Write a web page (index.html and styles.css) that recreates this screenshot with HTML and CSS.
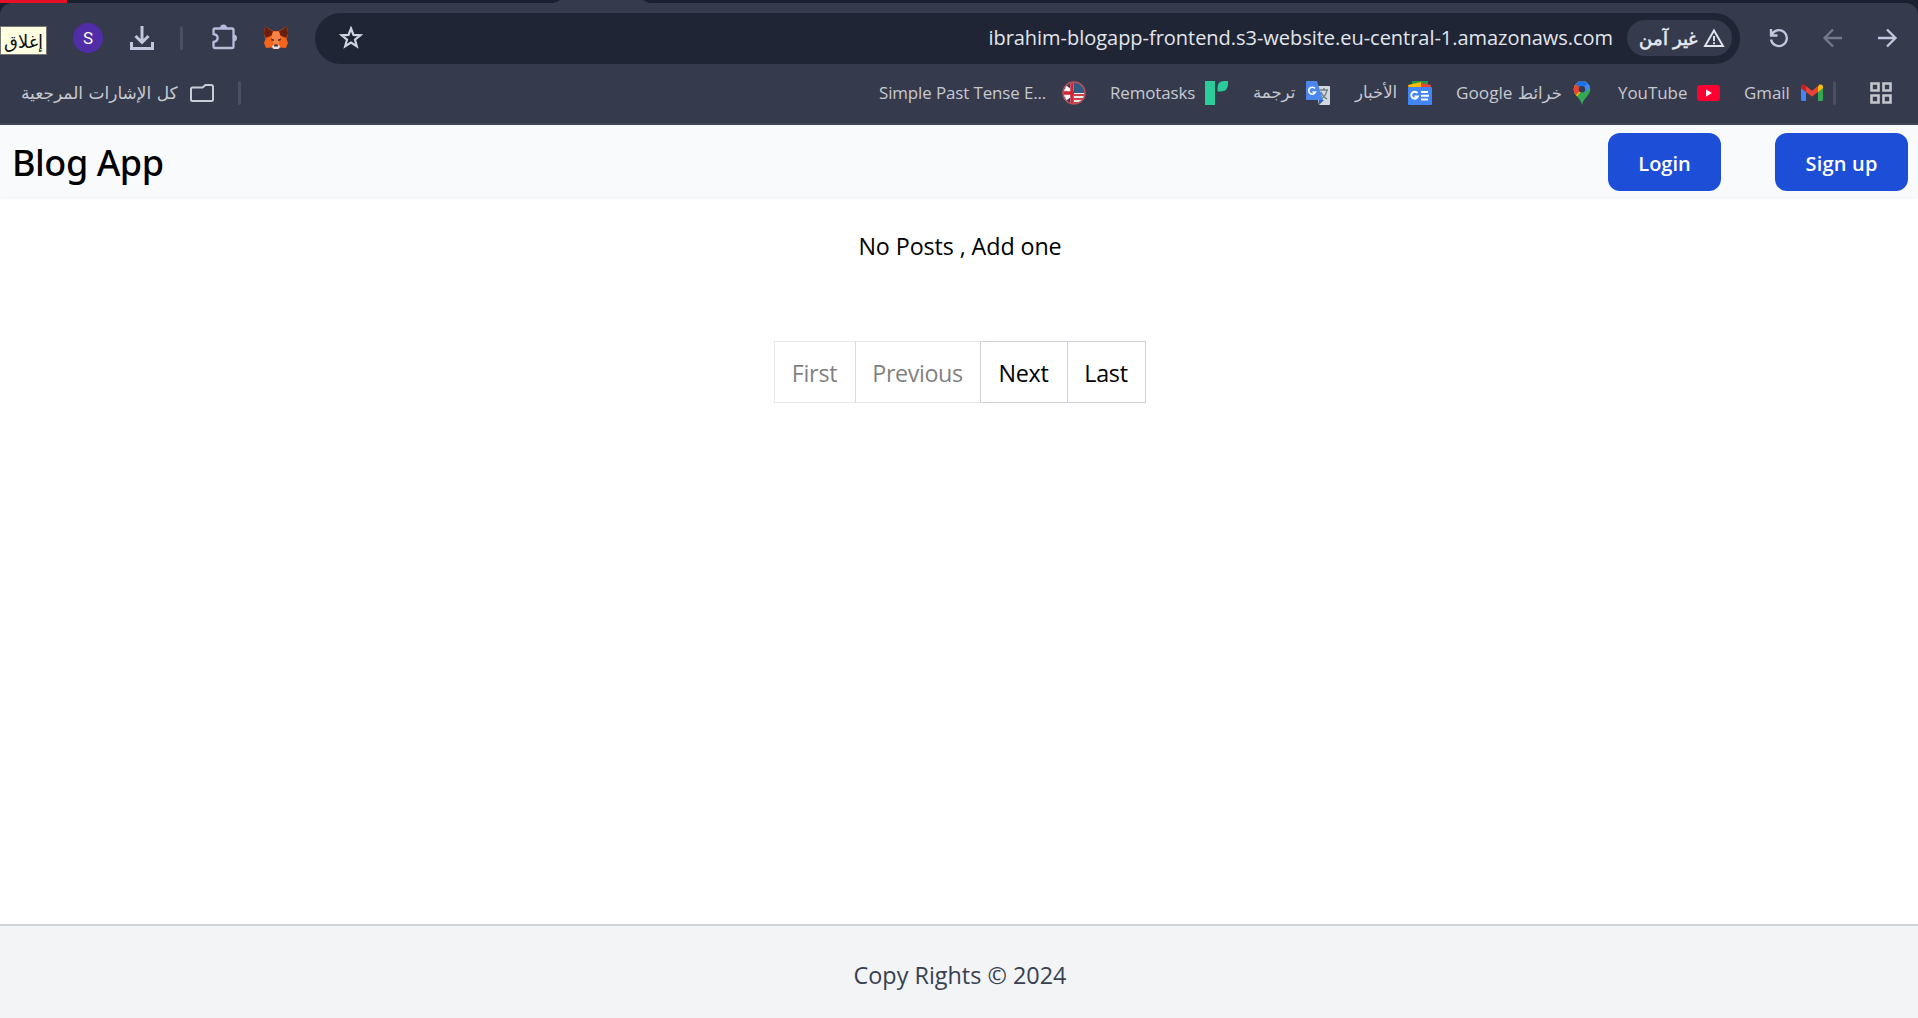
FILE: index.html
```
<!DOCTYPE html>
<html lang="en">
<head>
<meta charset="utf-8">
<title>Blog App</title>
<link rel="stylesheet" href="styles.css">
</head>
<body>
<header class="browser">
  <div class="tabstrip">
    <div class="close-hover"></div>
    <svg class="active-tab" width="97" height="3" viewBox="0 0 97 3"><path d="M0 3Q5 2 7 0H90Q92 2 97 3Z" fill="#353b4d"/></svg>
  </div>
  <div class="chrome">
    <div class="toolbar">
      <span class="avatar">S</span>
      <svg class="download" width="24" height="24" viewBox="0 0 24 24" fill="none" stroke="#c0c7de" stroke-width="3"><path d="M12 0v16M5.500 10l6.500 6.500 6.500-6.500M1.500 16v6.500h21V16"/></svg>
      <span class="divider tool-divider"></span>
      <svg class="puzzle" width="25" height="26" viewBox="0 0 25 26"><path d="M3 4.500h17q1.500 0 1.500 1.500v16.500q0 1.500-1.500 1.500H3q-1.500 0-1.500-1.500v-4.500c5.500-1 5.500-7 0-8V6Q1.500 4.500 3 4.500Z" fill="none" stroke="#b6bdd8" stroke-width="2.300"/><path d="M8 4a3.500 3.500 0 0 1 7 0ZM21.500 10.500a3.500 3.500 0 0 1 0 7Z" fill="#b6bdd8"/></svg>
      <svg class="fox" width="24" height="24" viewBox="0 0 24 24"><path d="M1 .5L9 5h6l8-4.500 1 7-1.500 5.500 1.500 4-2 5-5-.5-2.500 1.500h-5L7 21.500l-5 .5-2-5L1.500 13 0 7.500Z" fill="#f5651c"/><path d="M1 .5L9 5.500 7.500 9.500 2 12 0 7.500ZM23 .5L15 5.500l1.500 4 5.500 2.500 2-4.500Z" fill="#6b200d"/><path d="M9 6h6l1.500 5-2 8h-5l-2-8Z" fill="#fa8147"/><path d="M7 12.500l3 1v1.500l-2.500-.5ZM17 12.500l-3 1v1.500l2.500-.5Z" fill="#4a3028"/><path d="M8 20l2-1h4l2 1-.5 1.500L14 23h-4l-1.500-1.500Z" fill="#dce3ea"/><path d="M10.500 18.500h3l.5 2h-4Z" fill="#25282c"/></svg>
      <div class="omnibox">
        <svg width="24" height="24" viewBox="0 0 24 24" fill="none" stroke="#d0d4de" stroke-width="2.200"><path d="M12 2.500l2.500 6.400 6.800.4-5.300 4.400 1.800 6.600L12 16.600l-5.800 3.700L8 13.700 2.700 9.300l6.800-.4Z"/></svg>
        <span class="url">ibrahim-blogapp-frontend.s3-website.eu-central-1.amazonaws.com</span>
        <span class="security"><span class="arabic security-text" dir="rtl">غير آمن</span>
          <svg width="22" height="20" viewBox="0 0 22 20" fill="none" stroke="#e2e5ee" stroke-width="1.900"><path d="M11 2.500L20 18H2ZM11 8v5M11 14.300v2"/></svg>
        </span>
      </div>
      <div class="nav-icons">
        <svg width="24" height="24" viewBox="0 0 24 24" fill="none" stroke="#c0c7de" stroke-width="2.300"><path d="M4 3v6.500h6.500M4.500 9a8 8 0 1 1-.5 4.500"/></svg>
        <svg width="24" height="24" viewBox="0 0 24 24" fill="none" stroke="#747a8c" stroke-width="2.300"><path d="M21 12H4M12 3.500L3.500 12l8.500 8.500"/></svg>
        <svg width="24" height="24" viewBox="0 0 24 24" fill="none" stroke="#c0c7de" stroke-width="2.300"><path d="M3 12h17M12 3.500l8.500 8.500-8.500 8.500"/></svg>
      </div>
    </div>
    <div class="bookmarks">
      <div class="bookmark all"><span class="arabic" dir="rtl">كل الإشارات المرجعية</span>
        <svg width="24" height="20" viewBox="0 0 24 20"><path d="M2.500 4.500H12.500L15.500 2H21q2 0 2 2v12.500q0 1.500-1.500 1.500h-19Q1 18 1 16.500V6Q1 4.500 2.500 4.500Z" fill="none" stroke="#cacdd5" stroke-width="2"/></svg></div>
      <span class="divider all-divider"></span>
      <div class="bookmark-list">
        <div class="bookmark simple"><span>Simple Past Tense E...</span>
          <svg width="24" height="24" viewBox="0 0 24 24"><clipPath id="flag"><circle cx="12" cy="12" r="11"/></clipPath><g clip-path="url(#flag)"><path d="M0 0h24v24H0Z" fill="#eee"/><path d="M0 0h8v8H0ZM0 16h8v8H0Z" fill="#243d6b"/><path d="M0 3l9 7M0 21l9-7" stroke="#fff" stroke-width="3"/><path d="M0 12h12M10 0v24" stroke="#cc2534" stroke-width="3.500"/><path d="M12 0h12v12H12Z" fill="#315a85"/><path d="M12 14h12M12 18h12M12 22h12" stroke="#c94249" stroke-width="2"/></g><circle cx="12" cy="12" r="11" fill="none" stroke="#b8505b" stroke-width="1.500"/></svg></div>
        <div class="bookmark remo"><span>Remotasks</span>
          <svg width="23" height="24" viewBox="0 0 23 24"><path d="M0 0h10v24H0ZM23 0h-4q-6.500 0-6.500 7v3.500h3Q23 10.500 23 3Z" fill="#2bcc9a"/></svg></div>
        <div class="bookmark translate"><span class="arabic" dir="rtl">ترجمة</span>
          <svg width="24" height="24" viewBox="0 0 24 24"><path d="M9 5h14q1 0 1 1v17q0 1-1 1H13Z" fill="#d4d7db"/><path d="M13 19h5l-5 5Z" fill="#2b5dbd"/><path d="M14 9h8M18 7v2M21 9q-1 6-6 9M15 11q2 5 6 7" stroke="#6c8188" stroke-width="1.400" fill="none"/><path d="M1 0h10l6 19H1q-1 0-1-1V1Q0 0 1 0Z" fill="#4b87ed"/><path d="M9 7.500A3.500 3.500 0 1 0 9.500 11H6.500" fill="none" stroke="#fff" stroke-width="1.600"/></svg></div>
        <div class="bookmark news"><span class="arabic" dir="rtl">الأخبار</span>
          <svg width="24" height="24" viewBox="0 0 24 24"><path d="M4 0h16v8H4Z" fill="#249a50"/><path d="M0 4l13-3v7H1Z" fill="#fbbc04"/><path d="M13 2l10 2-1 5h-9Z" fill="#ea4335"/><rect y="6" width="24" height="18" rx="1" fill="#4285f4"/><path d="M9.500 12A3.500 3.500 0 1 0 10 15.500H6.500M13 11h7M13 14.800h8M13 18.500h7" fill="none" stroke="#fff" stroke-width="1.900"/></svg></div>
        <div class="bookmark maps"><span class="arabic" dir="rtl">خرائط <span class="latin">Google</span></span>
          <svg width="24" height="24" viewBox="0 0 24 24"><clipPath id="pin"><path d="M12 0a8.300 8.300 0 0 1 8.300 8.300c0 6-6.300 8-8.300 15.700C10 16.300 3.700 14.300 3.700 8.300A8.300 8.300 0 0 1 12 0Z"/></clipPath><g clip-path="url(#pin)"><path d="M0 0h24v24H0Z" fill="#34a853"/><path d="M0 0h20L3 20H0Z" fill="#fbbc04"/><path d="M0 0h15L12 8l-6 6H0Z" fill="#ea4335"/><path d="M5 2L10 7 20 4V0H5Z" fill="#1a73e8"/><path d="M12 8l6-6 4 3-8 7Z" fill="#4285f4"/></g><circle cx="12" cy="8.300" r="3.200" fill="#353b4d"/></svg></div>
        <div class="bookmark youtube"><span>YouTube</span>
          <svg width="23" height="16" viewBox="0 0 23 16"><rect width="23" height="16" rx="3.500" fill="#ff0033"/><path d="M9 4.500v7l6-3.500Z" fill="#fff"/></svg></div>
        <div class="bookmark gmail"><span>Gmail</span>
          <svg width="24" height="18" viewBox="0 0 24 18"><path d="M1 4l5 3.500V17H2.500Q1 17 1 15.500Z" fill="#4285f4"/><path d="M23 4l-5 3.500V17h3.500q1.500 0 1.500-1.500Z" fill="#34a853"/><path d="M18 2.500V8l5-3.700V3c0-2.500-2.500-3-4-2Z" fill="#fbbc04"/><path d="M6 2.500V8L1 4.300V3C1 .500 3.500 0 5 1Z" fill="#c5221f"/><path d="M6 2l6 4.700L18 2v6l-6 4.600L6 8Z" fill="#ea4335"/></svg></div>
      </div>
      <span class="divider apps-divider"></span>
      <svg class="apps" width="22" height="22" viewBox="0 0 22 22" fill="none" stroke="#c4c6cc" stroke-width="2.600"><path d="M1.500 1.500h7v7h-7ZM13.500 1.500h7v7h-7ZM1.500 13.500h7v7h-7ZM13.500 13.500h7v7h-7Z"/></svg>
    </div>
  </div>
  <div class="tooltip arabic" dir="rtl">إغلاق</div>
</header>
<nav class="navbar">
  <h1>Blog App</h1>
  <div class="actions"><button class="btn login">Login</button><button class="btn signup">Sign up</button></div>
</nav>
<main>
  <p class="empty">No Posts , Add one</p>
  <div class="pagination">
    <button class="page first" disabled>First</button><button class="page previous" disabled>Previous</button><button class="page next">Next</button><button class="page last">Last</button>
  </div>
</main>
<footer>Copy Rights © 2024</footer>
</body>
</html>
```
FILE: styles.css
```
*{box-sizing:border-box}
body{margin:0;height:1018px;display:flex;flex-direction:column;overflow:hidden;background:#fff;color:#000;font-family:"Open Sans","Noto Sans","DejaVu Sans",sans-serif}
svg{display:block;flex:none}
button{font-family:inherit;margin:0}
.browser{position:relative;height:125px;background:#1a2030;flex:none}
.tabstrip{display:flex;height:3px}
.close-hover{width:67px;background:#e81123}
.active-tab{margin-left:486px}
.chrome{height:122px;background:#353b4d;border-radius:12px 12px 0 0;border-bottom:2px solid #414755}
.toolbar{display:flex;align-items:center;height:70px;padding-left:73px}
.avatar{width:30px;height:30px;border-radius:50%;background:#512da8;color:#fff;font:17px/30px Roboto,sans-serif;text-align:center}
.download{margin-left:27px}
.divider{width:3px;height:24px;border-radius:2px;background:#4a5063;flex:none}
.tool-divider{margin-left:26px}
.puzzle{margin:-3px 0 0 29px}
.fox{margin-left:27px}
.omnibox{display:flex;align-items:center;width:1425px;height:51px;margin-left:27px;padding:0 8px 0 24px;border-radius:26px;background:#1f2534}
.url{margin-left:auto;color:#e2e5ee;font-size:20px;line-height:28px;letter-spacing:-.03px;white-space:nowrap}
.security{display:flex;align-items:center;justify-content:space-between;width:105px;height:36px;margin-left:14px;padding:0 7px 0 12px;border-radius:18px;background:#353b4d;color:#e2e5ee}
.arabic{font-family:"DejaVu Sans",sans-serif}
.security-text{font-family:"Noto Sans","Open Sans",sans-serif;font-weight:700;font-size:17.5px;line-height:24px}
.nav-icons{display:flex;gap:30px;margin-left:27px}
.bookmarks{display:flex;align-items:center;height:40px;padding-left:21px;color:#c7c9d0;font-size:16.9px;line-height:24px}
.bookmark{display:flex;align-items:center;justify-content:space-between;white-space:nowrap}
.bookmark .arabic{font-size:16.5px}
.all{width:193px}
.bookmark.all .arabic{font-size:17px}
.all-divider{margin-left:24px}
.bookmark-list{display:flex;gap:24px;margin-left:638px}
.simple{width:207px}
.simple>span{letter-spacing:-.1px}
.remo{width:118px}
.remo>span{letter-spacing:-.1px}
.translate,.news{width:77px;margin-left:1px}
.maps{width:138px}
.bookmark .latin{font-family:"Open Sans",sans-serif;font-size:17.2px}
.youtube{width:102px}
.gmail{width:80px}
.apps-divider{margin-left:9px}
.apps{margin-left:34px}
.tooltip{position:absolute;left:0;top:26px;width:47px;height:29px;border:1px solid #767676;background:#ffffe1;color:#111;font-size:18px;line-height:30px;text-align:center}
.navbar{display:flex;align-items:center;justify-content:space-between;height:72px;flex:none;padding:2px 10px 0 12px;background:#f9fafc;box-shadow:0 1px 3px rgba(0,0,0,.06);z-index:1}
h1{margin:0;padding-top:2px;font:500 36px/44px "Noto Sans",sans-serif;letter-spacing:-.45px}
.actions{display:flex;gap:54px}
.btn{height:58px;border:0;padding:2px 0 0;border-radius:12px;background:#1d4ed8;color:#fff;font-size:20px;font-weight:600}
.login{width:113px}
.signup{width:133px;letter-spacing:.2px}
main{flex:1;display:flex;flex-direction:column;align-items:center;padding:32px 0 0 2px}
.empty{margin:0;font-size:23.3px;line-height:34px;letter-spacing:-.1px}
.pagination{display:flex;margin:78px 1px 0 0}
.page{height:62px;border:1px solid #d1d1da;background:#fff;color:#000;font-size:23.3px;letter-spacing:-.25px;padding:2px 0 0}
.page+.page{margin-left:-1px}
.page:disabled{opacity:.5}
.first{width:82px}
.page.previous{width:126px;letter-spacing:-.4px}
.next{width:88px}
.last{width:79px}
footer{display:flex;align-items:center;justify-content:center;height:94px;flex:none;border-top:2px solid #d1d5db;background:#f3f4f6;color:#374151;font-size:23.4px;padding:6px 0 0 2px}
```
